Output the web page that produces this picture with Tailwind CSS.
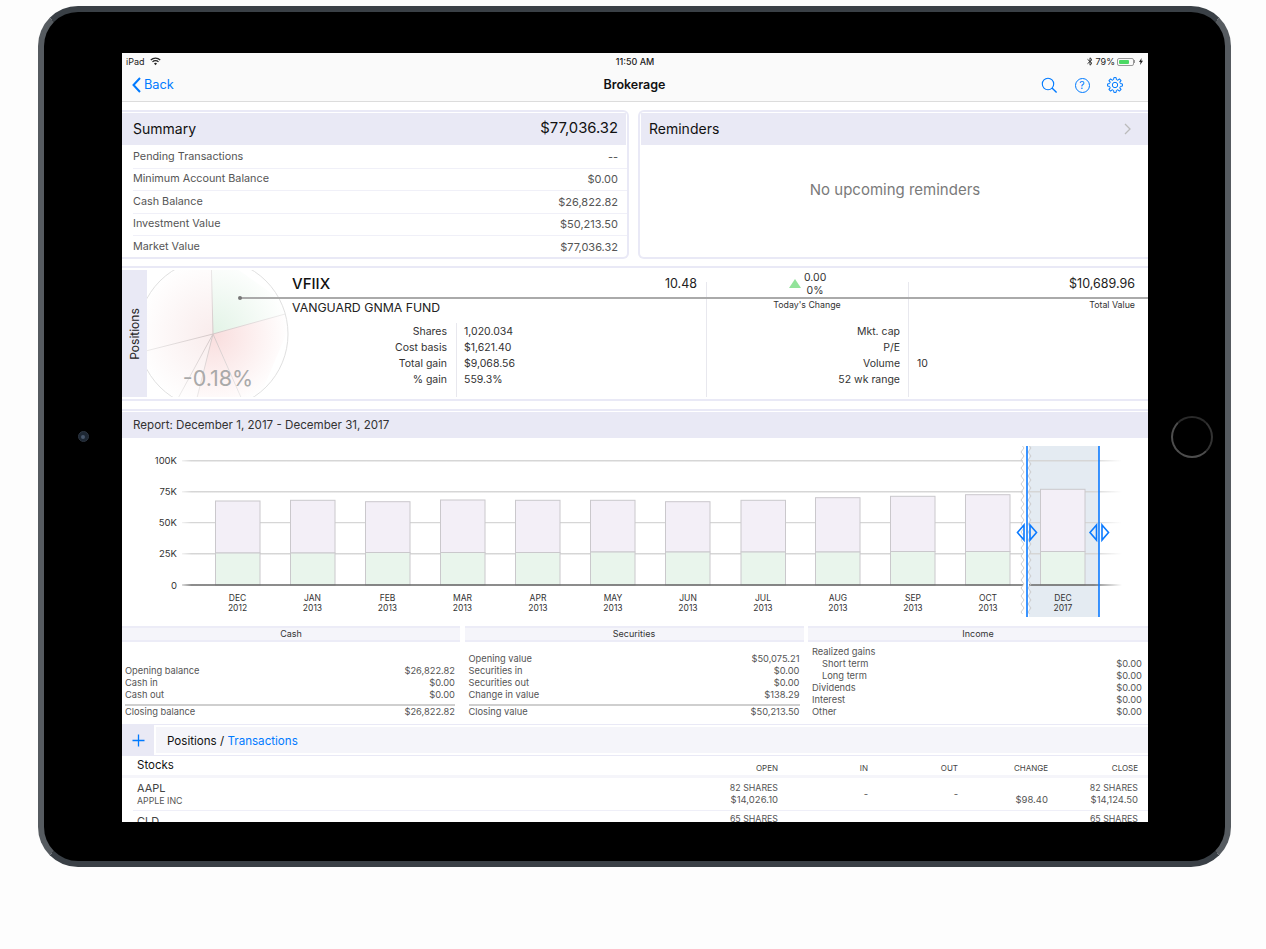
<!DOCTYPE html>
<html>
<head>
<meta charset="utf-8">
<script src="https://cdn.jsdelivr.net/npm/@tailwindcss/browser@4"></script>
</head>
<body class="bg-[#fdfdfd] font-[family-name:Inter,sans-serif]">
<div class="w-[1266px] h-[949px] pt-[6px] pl-[38px] overflow-hidden">
  <!-- device -->
  <div class="w-[1193px] h-[861px] rounded-[40px] border-[6px] border-y-[#3a4046] border-x-[#565b60] bg-black flex items-center pt-[2px]">
    <div class="w-[78px] flex justify-center shrink-0">
      <div class="w-[11px] h-[11px] rounded-full bg-[#1d2733] border border-[#2c3440] flex items-center justify-center -mt-[2px]"><div class="w-[4px] h-[4px] rounded-full bg-[#47566b]"></div></div>
    </div>
    <!-- screen -->
    <div class="w-[1026px] h-[769px] bg-white overflow-hidden flex flex-col shrink-0 text-[#444]">
      <!-- status bar -->
      <div class="h-[17px] bg-[#fafafa] grid grid-cols-3 items-center text-[9px] text-[#222] shrink-0">
        <div class="flex items-center gap-[5px] pl-[4px]">
          <span>iPad</span>
          <svg width="11" height="9" viewBox="0 0 11 9" fill="none" stroke="#222" stroke-width="1.2"><path d="M.8 3a6.6 6.6 0 0 1 9.4 0"/><path d="M2.5 4.8a4.2 4.2 0 0 1 6 0"/><path d="M5.5 8.2 4 6.5a2.2 2.2 0 0 1 3 0z" fill="#222" stroke="none"/></svg>
        </div>
        <div class="text-center font-medium">11:50 AM</div>
        <div class="flex items-center justify-end pr-[5px]">
          <svg width="6" height="9" viewBox="0 0 6 9" fill="none" stroke="#222" stroke-width=".9" class="mr-[3px]"><path d="M.5 2.3 5 6.3 3 8.2V.8l2 1.9L.5 6.7"/></svg>
          <span class="mr-[2px]">79%</span>
          <div class="w-[17px] h-[8px] rounded-[2px] border border-[#999] p-[1px]"><div class="w-[79%] h-full bg-[#4cd964] rounded-[1px]"></div></div>
          <div class="w-[1px] h-[3px] bg-[#999] mr-[4px]"></div>
          <svg width="4" height="7" viewBox="0 0 4 7" fill="#222"><path d="M2.6 0 0 4h1.5L1.1 7 4 2.8H2.3z"/></svg>
        </div>
      </div>
      <!-- nav -->
      <div class="h-[32px] bg-[#fafafa] border-b border-[#dcdcdc] grid grid-cols-3 items-center pb-[1px] shrink-0">
        <div class="flex items-center pl-[10px] gap-[3px] text-[12.8px] text-[#007aff]">
          <svg width="9" height="16" viewBox="0 0 9 16" fill="none" stroke="#007aff" stroke-width="2"><path d="M8 1 1.5 8 8 15"/></svg>
          <span>Back</span>
        </div>
        <div class="text-center text-[12.5px] font-semibold text-[#111] pr-[1px]">Brokerage</div>
        <div class="flex items-center justify-end gap-[15px] pr-[24px]">
          <svg width="18" height="18" viewBox="0 0 18 18" fill="none" stroke="#007aff" stroke-width="1.1"><circle cx="8" cy="8" r="5.7"/><path d="m12 12 4.6 4.6" stroke-width="1.4"/></svg>
          <div class="w-[18px] h-[18px] flex items-center justify-center"><div class="w-[15px] h-[15px] rounded-full border border-[#007aff] text-[#007aff] text-[10.5px] leading-[13px] text-center">?</div></div>
          <svg width="18" height="18" viewBox="-9 -9 18 18" fill="none" stroke="#007aff" stroke-width="1" stroke-linejoin="round">
            <circle r="2.7"/>
            <path d="M-2.14-5.17-1.35-5.43-1.17-7.41 1.17-7.41 1.35-5.43 2.14-5.17"/>
            <path transform="rotate(45)" d="M-2.14-5.17-1.35-5.43-1.17-7.41 1.17-7.41 1.35-5.43 2.14-5.17"/>
            <path transform="rotate(90)" d="M-2.14-5.17-1.35-5.43-1.17-7.41 1.17-7.41 1.35-5.43 2.14-5.17"/>
            <path transform="rotate(135)" d="M-2.14-5.17-1.35-5.43-1.17-7.41 1.17-7.41 1.35-5.43 2.14-5.17"/>
            <path transform="rotate(180)" d="M-2.14-5.17-1.35-5.43-1.17-7.41 1.17-7.41 1.35-5.43 2.14-5.17"/>
            <path transform="rotate(225)" d="M-2.14-5.17-1.35-5.43-1.17-7.41 1.17-7.41 1.35-5.43 2.14-5.17"/>
            <path transform="rotate(270)" d="M-2.14-5.17-1.35-5.43-1.17-7.41 1.17-7.41 1.35-5.43 2.14-5.17"/>
            <path transform="rotate(315)" d="M-2.14-5.17-1.35-5.43-1.17-7.41 1.17-7.41 1.35-5.43 2.14-5.17"/>
          </svg>
        </div>
      </div>
      <!-- cards -->
      <div class="flex gap-[9px] mt-[8px] h-[149px] shrink-0">
        <div class="w-[507px] border-2 border-l-0 border-[#e9e9f6] rounded-r-[6px] pt-[1px]">
          <div class="h-[32px] bg-[#e9e9f5] flex items-center justify-between pl-[11px] pr-[8px] pb-[1px] text-[14px] text-[#111] mr-[1px]">
            <span>Summary</span><span class="text-[14.8px]">$77,036.32</span>
          </div>
          <div class="pl-[11px] pt-[1.4px] text-[11px] text-[#555]">
            <div class="h-[22.4px] flex items-center justify-between pr-[9px] border-b border-[#f0f0f8]"><span class="text-[10.8px]">Pending Transactions</span><span>--</span></div>
            <div class="h-[22.4px] flex items-center justify-between pr-[9px] border-b border-[#f0f0f8]"><span class="text-[10.8px]">Minimum Account Balance</span><span>$0.00</span></div>
            <div class="h-[22.4px] flex items-center justify-between pr-[9px] border-b border-[#f0f0f8]"><span class="text-[10.8px]">Cash Balance</span><span>$26,822.82</span></div>
            <div class="h-[22.4px] flex items-center justify-between pr-[9px] border-b border-[#f0f0f8]"><span class="text-[10.8px]">Investment Value</span><span>$50,213.50</span></div>
            <div class="h-[22.4px] flex items-center justify-between pr-[9px]"><span class="text-[10.8px]">Market Value</span><span>$77,036.32</span></div>
          </div>
        </div>
        <div class="w-[510px] border-2 border-r-0 border-[#e9e9f6] rounded-l-[6px] pt-[1px] pl-[1px] flex flex-col">
          <div class="h-[32px] bg-[#e9e9f5] flex items-center justify-between pl-[8px] pr-[17px] pb-[1px] text-[14px] text-[#111]">
            <span>Reminders</span>
            <svg width="7" height="12" viewBox="0 0 7 12" fill="none" stroke="#bbb" stroke-width="1.3"><path d="m1 1 5 5-5 5"/></svg>
          </div>
          <div class="flex-1 flex items-center justify-center text-[15px] text-[#7a7a7a] pb-[22px] pl-[1px]">No upcoming reminders</div>
        </div>
      </div>
      <!-- positions panel -->
      <div class="mt-[7px] h-[135px] border-y-2 border-[#e9e9f6] py-[2px] flex relative shrink-0">
        <div class="w-[25px] bg-[#e9e9f5] flex items-center justify-center shrink-0">
          <span class="-rotate-90 text-[12px] text-[#222] whitespace-nowrap">Positions</span>
        </div>
        <svg width="145" height="127" viewBox="147 270 145 127" class="shrink-0">
          <defs>
            <radialGradient id="gGreen" gradientUnits="userSpaceOnUse" cx="213" cy="334" r="76"><stop offset="0" stop-color="#e2f3e6"/><stop offset="1" stop-color="#ffffff"/></radialGradient>
            <radialGradient id="gRed" gradientUnits="userSpaceOnUse" cx="213" cy="334" r="76"><stop offset="0" stop-color="#f9dddd"/><stop offset="1" stop-color="#ffffff"/></radialGradient>
            <radialGradient id="gRed2" gradientUnits="userSpaceOnUse" cx="213" cy="334" r="76"><stop offset="0" stop-color="#f9ecec"/><stop offset="1" stop-color="#ffffff"/></radialGradient>
            <radialGradient id="gLine" gradientUnits="userSpaceOnUse" cx="213" cy="334" r="76"><stop offset="0" stop-color="#d3c6c6"/><stop offset="1" stop-color="#eeeeee"/></radialGradient>
            <clipPath id="pieClip"><circle cx="213" cy="334" r="75"/></clipPath>
          </defs>
          <g clip-path="url(#pieClip)">
            <path d="M213 334 211 250 296 311Z" fill="url(#gGreen)"/>
            <path d="M213 334 296 311 250 420Z" fill="url(#gRed)"/>
            <path d="M213 334 250 420 190 420Z" fill="url(#gRed)"/>
            <path d="M213 334 190 420 170 420 130 355Z" fill="url(#gRed2)"/>
            <path d="M213 334 130 355 130 250 211 250Z" fill="url(#gRed2)"/>
            <path d="M213 334 211 250M213 334 296 311M213 334 243 402M213 334 196 402M213 334 176 402M213 334 130 355" stroke="url(#gLine)" stroke-width="1" fill="none"/>
          </g>
          <circle cx="213" cy="334" r="75" fill="none" stroke="#e0e0e0" stroke-width="1"/>
          <text x="218" y="386" text-anchor="middle" class="text-[21.5px] fill-[#a9a9a9]">-0.18%</text>
        </svg>
        <div class="flex-1 grid grid-cols-[414px_202px_240px]">
          <div class="relative">
            <div class="h-[27px] flex items-center justify-between pr-[9px] pt-[1px]">
              <span class="text-[15px] font-medium text-[#111]">VFIIX</span>
              <span class="text-[12.5px] text-[#222]">10.48</span>
            </div>
            <div class="h-[20px] flex items-center text-[12.3px] text-[#222] pt-[2px]">VANGUARD GNMA FUND</div>
            <div class="mt-[7px] grid grid-cols-[155px_1fr] gap-x-[17px] text-[10.5px] leading-[16px] text-[#333]">
              <div class="text-right">Shares</div><div>1,020.034</div>
              <div class="text-right">Cost basis</div><div>$1,621.40</div>
              <div class="text-right">Total gain</div><div>$9,068.56</div>
              <div class="text-right">% gain</div><div>559.3%</div>
            </div>
            <div class="absolute left-[164px] top-[53px] bottom-0 w-px bg-[#e8e8ee]"></div>
          </div>
          <div class="relative">
            <div class="h-[27px] flex items-center pl-[83px] gap-[3px]">
              <svg width="12" height="9" viewBox="0 0 12 9"><path d="M6 0 12 9H0z" fill="#92e39a"/></svg>
              <div class="w-[22px] text-[10.5px] leading-[13px] text-center text-[#333]"><div>0.00</div><div>0%</div></div>
            </div>
            <div class="h-[16px] flex items-center justify-center text-[8.8px] text-[#333]">Today's Change</div>
            <div class="mt-[11px] pr-[8px] text-right text-[10.5px] leading-[16px] text-[#333]">
              <div>Mkt. cap</div><div>P/E</div><div>Volume</div><div>52 wk range</div>
            </div>
            <div class="absolute left-0 top-[12px] bottom-0 w-px bg-[#e8e8ee]"></div>
          </div>
          <div class="relative">
            <div class="h-[27px] flex items-center justify-end pr-[13px] pt-[1px] text-[12.5px] text-[#222]">$10,689.96</div>
            <div class="h-[16px] flex items-center justify-end pr-[13px] text-[8.8px] text-[#333]">Total Value</div>
            <div class="mt-[11px] pl-[9px] text-[10.5px] leading-[16px] text-[#333]">
              <div class="h-[16px]"></div><div class="h-[16px]"></div><div>10</div><div class="h-[16px]"></div>
            </div>
            <div class="absolute left-0 top-[12px] bottom-0 w-px bg-[#e8e8ee]"></div>
          </div>
        </div>
        <!-- leader line over the panel -->
        <div class="absolute left-[118px] right-0 top-[29px] h-[1.5px] bg-[#aaaaaa]"></div>
        <div class="absolute left-[116px] top-[28px] w-[4px] h-[4px] rounded-full bg-[#777]"></div>
      </div>
      <!-- report header -->
      <div class="mt-[8px] border-t-2 border-[#e9e9f6] pt-[1px] shrink-0">
        <div class="h-[26px] bg-[#e9e9f5] flex items-center pl-[11px] pt-[1px] text-[11.6px] text-[#333]">Report: December 1, 2017 - December 31, 2017</div>
      </div>
      <!-- chart -->
      <svg width="1026" height="188" viewBox="122 438 1026 188" class="shrink-0 block">
        <defs>
          <linearGradient id="gridFade" gradientUnits="userSpaceOnUse" x1="182" y1="0" x2="1122" y2="0">
            <stop offset="0" stop-color="#d6d6d6" stop-opacity="0.3"/><stop offset="0.01" stop-color="#d6d6d6"/><stop offset="0.97" stop-color="#d6d6d6"/><stop offset="1" stop-color="#d6d6d6" stop-opacity="0"/>
          </linearGradient>
          <linearGradient id="axisFade" gradientUnits="userSpaceOnUse" x1="182" y1="0" x2="1122" y2="0">
            <stop offset="0" stop-color="#666" stop-opacity="0.3"/><stop offset="0.01" stop-color="#666"/><stop offset="0.97" stop-color="#666"/><stop offset="1" stop-color="#666" stop-opacity="0"/>
          </linearGradient>
        </defs>
        <rect x="1028" y="446" width="71" height="171" fill="#e4ebf2"/>
        <g fill="none" stroke="url(#gridFade)" stroke-width="1.4">
          <path d="M182 460.7H1122"/><path d="M182 491.7H1122"/><path d="M182 522.6H1122"/><path d="M182 553.8H1122"/>
        </g>
        <!-- bars -->
        <g stroke="#cac8cc" stroke-width="1">
          <rect x="215.5" y="501" width="44.5" height="52" fill="#f3eff7"/><rect x="215.5" y="553" width="44.5" height="32" fill="#e9f5ec"/>
          <rect x="290.5" y="500.3" width="44.5" height="52.7" fill="#f3eff7"/><rect x="290.5" y="553" width="44.5" height="32" fill="#e9f5ec"/>
          <rect x="365.5" y="501.7" width="44.5" height="50.8" fill="#f3eff7"/><rect x="365.5" y="552.5" width="44.5" height="32.5" fill="#e9f5ec"/>
          <rect x="440.5" y="500" width="44.5" height="52.5" fill="#f3eff7"/><rect x="440.5" y="552.5" width="44.5" height="32.5" fill="#e9f5ec"/>
          <rect x="515.5" y="500.3" width="44.5" height="52.2" fill="#f3eff7"/><rect x="515.5" y="552.5" width="44.5" height="32.5" fill="#e9f5ec"/>
          <rect x="590.5" y="500.3" width="44.5" height="51.7" fill="#f3eff7"/><rect x="590.5" y="552" width="44.5" height="33" fill="#e9f5ec"/>
          <rect x="665.5" y="501.7" width="44.5" height="50.3" fill="#f3eff7"/><rect x="665.5" y="552" width="44.5" height="33" fill="#e9f5ec"/>
          <rect x="741" y="500.3" width="44.5" height="51.7" fill="#f3eff7"/><rect x="741" y="552" width="44.5" height="33" fill="#e9f5ec"/>
          <rect x="815.5" y="497.7" width="44.5" height="54.3" fill="#f3eff7"/><rect x="815.5" y="552" width="44.5" height="33" fill="#e9f5ec"/>
          <rect x="890.5" y="496.3" width="44.5" height="55.2" fill="#f3eff7"/><rect x="890.5" y="551.5" width="44.5" height="33.5" fill="#e9f5ec"/>
          <rect x="965.5" y="494.7" width="44.5" height="56.8" fill="#f3eff7"/><rect x="965.5" y="551.5" width="44.5" height="33.5" fill="#e9f5ec"/>
          <rect x="1040.5" y="489.3" width="44.5" height="62.2" fill="#f3eff7"/><rect x="1040.5" y="551.5" width="44.5" height="33.5" fill="#e9f5ec"/>
        </g>
        <path d="M182 585H1122" stroke="url(#axisFade)" stroke-width="1.6"/>
        <!-- break strip -->
        <rect x="1023" y="446" width="6" height="171" fill="#ffffff"/>
        <g fill="none" stroke="#c9c9c9" stroke-width="0.9">
          <path d="M1022.5 446q3 2 0 4t0 4t0 4t0 4t0 4t0 4t0 4t0 4t0 4t0 4t0 4t0 4t0 4t0 4t0 4t0 4t0 4t0 4t0 4t0 4t0 4t0 4t0 4t0 4t0 4t0 4t0 4t0 4t0 4t0 4t0 4t0 4t0 4t0 4t0 4t0 4t0 4t0 4t0 4t0 4t0 4t0 4"/>
          <path d="M1029.5 446q3 2 0 4t0 4t0 4t0 4t0 4t0 4t0 4t0 4t0 4t0 4t0 4t0 4t0 4t0 4t0 4t0 4t0 4t0 4t0 4t0 4t0 4t0 4t0 4t0 4t0 4t0 4t0 4t0 4t0 4t0 4t0 4t0 4t0 4t0 4t0 4t0 4t0 4t0 4t0 4t0 4t0 4t0 4"/>
        </g>
        <!-- selection handles -->
        <g fill="none" stroke="#0a7aff" stroke-width="1.6">
          <path d="M1027 446V617M1099 446V617"/>
          <path d="M1024 525 1017.5 532.5 1024 540Z"/><path d="M1030 525 1036.5 532.5 1030 540Z"/>
          <path d="M1096.5 525 1090 532.5 1096.5 540Z"/><path d="M1102 525 1108.5 532.5 1102 540Z"/>
        </g>
        <g text-anchor="end" class="text-[9.5px] fill-[#333]">
          <text x="177" y="464">100K</text><text x="177" y="495">75K</text><text x="177" y="526">50K</text><text x="177" y="557">25K</text><text x="177" y="588.5">0</text>
        </g>
        <g text-anchor="middle" class="text-[8.5px] fill-[#333]">
          <text x="237.5" y="600.5">DEC</text><text x="237.5" y="610.5">2012</text>
          <text x="312.5" y="600.5">JAN</text><text x="312.5" y="610.5">2013</text>
          <text x="387.5" y="600.5">FEB</text><text x="387.5" y="610.5">2013</text>
          <text x="462.5" y="600.5">MAR</text><text x="462.5" y="610.5">2013</text>
          <text x="538" y="600.5">APR</text><text x="538" y="610.5">2013</text>
          <text x="613" y="600.5">MAY</text><text x="613" y="610.5">2013</text>
          <text x="688" y="600.5">JUN</text><text x="688" y="610.5">2013</text>
          <text x="763" y="600.5">JUL</text><text x="763" y="610.5">2013</text>
          <text x="838" y="600.5">AUG</text><text x="838" y="610.5">2013</text>
          <text x="913" y="600.5">SEP</text><text x="913" y="610.5">2013</text>
          <text x="988" y="600.5">OCT</text><text x="988" y="610.5">2013</text>
          <text x="1063" y="600.5">DEC</text><text x="1063" y="610.5">2017</text>
        </g>
      </svg>
      <!-- three tables -->
      <div class="h-[99px] grid grid-cols-[338px_339px_340px] gap-x-[4.5px] border-b border-[#e9e9f6] shrink-0 text-[9.3px] leading-[12px] text-[#555]">
        <div class="flex flex-col">
          <div class="h-[16px] border-y-2 border-[#ececf7] bg-[#f5f5fa] flex items-center justify-center text-[9px] text-[#333] shrink-0">Cash</div>
          <div class="flex-1 flex flex-col justify-end pb-[6px] pl-[3px] pr-[5px]">
            <div class="flex justify-between"><span>Opening balance</span><span>$26,822.82</span></div>
            <div class="flex justify-between"><span>Cash in</span><span>$0.00</span></div>
            <div class="flex justify-between"><span>Cash out</span><span>$0.00</span></div>
            <div class="h-[1.5px] bg-[#cfcfcf] mt-[3px] mb-[.5px]"></div>
            <div class="flex justify-between"><span>Closing balance</span><span>$26,822.82</span></div>
          </div>
        </div>
        <div class="flex flex-col">
          <div class="h-[16px] border-y-2 border-[#ececf7] bg-[#f5f5fa] flex items-center justify-center text-[9px] text-[#333] shrink-0">Securities</div>
          <div class="flex-1 flex flex-col justify-end pb-[6px] pl-[4px] pr-[4px]">
            <div class="flex justify-between"><span>Opening value</span><span>$50,075.21</span></div>
            <div class="flex justify-between"><span>Securities in</span><span>$0.00</span></div>
            <div class="flex justify-between"><span>Securities out</span><span>$0.00</span></div>
            <div class="flex justify-between"><span>Change in value</span><span>$138.29</span></div>
            <div class="h-[1.5px] bg-[#cfcfcf] mt-[3px] mb-[.5px]"></div>
            <div class="flex justify-between"><span>Closing value</span><span>$50,213.50</span></div>
          </div>
        </div>
        <div class="flex flex-col">
          <div class="h-[16px] border-y-2 border-[#ececf7] bg-[#f5f5fa] flex items-center justify-center text-[9px] text-[#333] shrink-0">Income</div>
          <div class="flex-1 flex flex-col justify-end pb-[6px] pl-[4px] pr-[6px]">
            <div class="flex justify-between"><span>Realized gains</span><span></span></div>
            <div class="flex justify-between"><span class="pl-[10px]">Short term</span><span>$0.00</span></div>
            <div class="flex justify-between"><span class="pl-[10px]">Long term</span><span>$0.00</span></div>
            <div class="flex justify-between"><span>Dividends</span><span>$0.00</span></div>
            <div class="flex justify-between"><span>Interest</span><span>$0.00</span></div>
            <div class="flex justify-between"><span>Other</span><span>$0.00</span></div>
          </div>
        </div>
      </div>
      <!-- positions / transactions -->
      <div class="h-[31px] flex gap-[2px] shrink-0 border-b border-[#e9e9f6]">
        <div class="w-[32px] bg-[#e9e9f5] flex items-center justify-center">
          <svg width="13" height="13" viewBox="0 0 13 13" fill="none" stroke="#007aff" stroke-width="1.3"><path d="M6.5.5v12M.5 6.5h12"/></svg>
        </div>
        <div class="flex-1 bg-[#f5f5fa] my-[2px] flex items-center pl-[11px] pt-[3px] text-[11.6px] text-[#111]">Positions /&nbsp;<span class="text-[#007aff]">Transactions</span></div>
      </div>
      <!-- stocks header -->
      <div class="h-[22px] border-b-[3px] border-[#f5f5fa] flex items-center pl-[15px] pt-[1px] shrink-0">
        <span class="w-[449px] text-[11.5px] text-[#111]">Stocks</span>
        <div class="grid grid-cols-[192px_90px_90px_90px_90px] text-right text-[8px] text-[#444] pt-[4px]">
          <span>OPEN</span><span>IN</span><span>OUT</span><span>CHANGE</span><span>CLOSE</span>
        </div>
      </div>
      <!-- rows -->
      <div class="h-[33px] ml-[11px] pl-[4px] border-b border-[#efeff8] flex items-center shrink-0">
        <div class="w-[449px]"><div class="text-[11px] leading-[13px] text-[#444]">AAPL</div><div class="text-[8.8px] leading-[11px] text-[#555]">APPLE INC</div></div>
        <div class="grid grid-cols-[192px_90px_90px_90px_90px] items-center text-right text-[9.5px] leading-[12.5px] text-[#555]">
          <div><span class="text-[8.8px]">82 SHARES</span><br>$14,026.10</div><div>-</div><div>-</div><div><br>$98.40</div><div><span class="text-[8.8px]">82 SHARES</span><br>$14,124.50</div>
        </div>
      </div>
      <div class="h-[33px] ml-[11px] pl-[4px] flex items-start pt-[4px] shrink-0">
        <div class="w-[449px]"><div class="text-[11px] leading-[13px] text-[#444]">CLD</div></div>
        <div class="grid grid-cols-[192px_90px_90px_90px_90px] text-right text-[8.8px] leading-[12.5px] text-[#555] -mt-[2px]">
          <div>65 SHARES</div><div></div><div></div><div></div><div>65 SHARES</div>
        </div>
      </div>
    </div>
    <div class="flex-1 flex justify-center pl-[10px]">
      <div class="w-[42px] h-[42px] rounded-full border-2 border-[#4d4d4d] border-t-[#2a2a2a] border-r-[#333333] blur-[.4px] -mt-[2px]"></div>
    </div>
  </div>
</div>
</body>
</html>
